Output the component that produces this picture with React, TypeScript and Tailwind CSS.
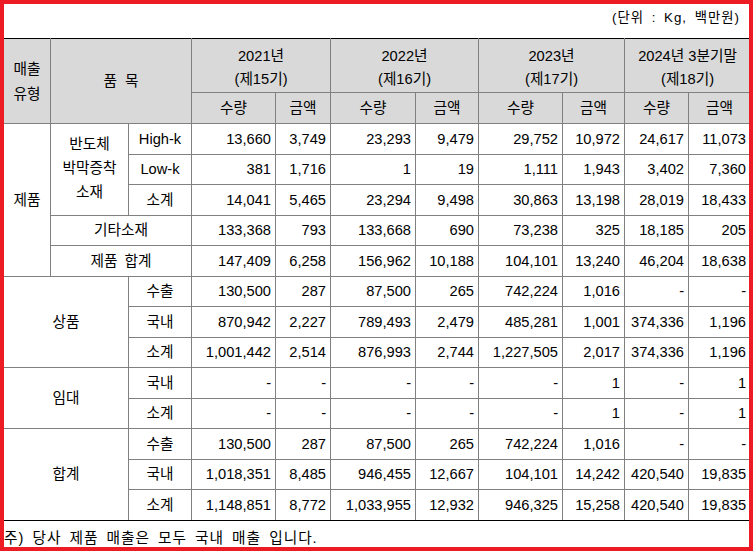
import type { ReactNode } from "react";

const YEARS = [
  { year: "2021년", term: "(제15기)" },
  { year: "2022년", term: "(제16기)" },
  { year: "2023년", term: "(제17기)" },
  { year: "2024년 3분기말", term: "(제18기)" },
];

const CELL = "border border-[#808080] p-0 align-middle";
const NUM = `${CELL} text-right pr-[4px]`;

function Nums({ vals, last = false }: { vals: string[]; last?: boolean }) {
  return (
    <>
      {vals.map((v, i) => (
        <td key={i} className={last ? `${NUM} border-b-black` : NUM}>
          {v}
        </td>
      ))}
    </>
  );
}

function Sub({ children, last = false }: { children: ReactNode; last?: boolean }) {
  return <td className={last ? `${CELL} text-center border-b-black` : `${CELL} text-center`}>{children}</td>;
}

export default function App() {
  return (
    <div className="w-[753px] h-[551px] border-[4px] border-[#ed1c24] bg-white overflow-hidden font-['Liberation_Sans','Noto_Sans_CJK_KR',sans-serif] text-black">
      {/* ── Unit caption ─────────────────────────────────────────── */}
      <div className="h-[34px] pt-[4px] pr-[9px] text-right text-[13.33px] leading-[20px] tracking-[1px] [word-spacing:3px]">
        (단위 : Kg, 백만원)
      </div>

      {/* ── Table ────────────────────────────────────────────────── */}
      <table className="w-[747px] ml-[-1px] table-fixed border-collapse text-[14.67px] leading-[20px]">
        <colgroup>
          <col className="w-[47px]" />
          <col className="w-[78px]" />
          <col className="w-[63px]" />
          <col className="w-[84px]" />
          <col className="w-[55px]" />
          <col className="w-[85px]" />
          <col className="w-[63px]" />
          <col className="w-[84px]" />
          <col className="w-[62px]" />
          <col className="w-[64px]" />
          <col className="w-[62px]" />
        </colgroup>
        <thead className="bg-[#d9d9d9]">
          <tr className="h-[54px]">
            <th rowSpan={2} className={`${CELL} border-t-black font-normal leading-[25px] pt-[2px]`}>
              매출
              <br />
              유형
            </th>
            <th rowSpan={2} colSpan={2} className={`${CELL} border-t-black font-normal [word-spacing:4px]`}>
              품 목
            </th>
            {YEARS.map((y) => (
              <th key={y.year} colSpan={2} className={`${CELL} border-t-black font-normal leading-[23px] pt-[4px]`}>
                {y.year}
                <br />
                {y.term}
              </th>
            ))}
          </tr>
          <tr className="h-[31px]">
            {YEARS.map((y) => (
              <>
                <th key={`${y.year}-q`} className={`${CELL} font-normal`}>수량</th>
                <th key={`${y.year}-a`} className={`${CELL} font-normal`}>금액</th>
              </>
            ))}
          </tr>
        </thead>
        <tbody>
          {/* 제품 */}
          <tr className="h-[30.5px]">
            <td rowSpan={5} className={`${CELL} text-center`}>제품</td>
            <td rowSpan={3} className={`${CELL} text-center leading-[24px] pb-[2px]`}>
              반도체
              <br />
              박막증착
              <br />
              소재
            </td>
            <Sub>High-k</Sub>
            <Nums vals={["13,660", "3,749", "23,293", "9,479", "29,752", "10,972", "24,617", "11,073"]} />
          </tr>
          <tr className="h-[30.5px]">
            <Sub>Low-k</Sub>
            <Nums vals={["381", "1,716", "1", "19", "1,111", "1,943", "3,402", "7,360"]} />
          </tr>
          <tr className="h-[30.5px]">
            <Sub>소계</Sub>
            <Nums vals={["14,041", "5,465", "23,294", "9,498", "30,863", "13,198", "28,019", "18,433"]} />
          </tr>
          <tr className="h-[30.5px]">
            <td colSpan={2} className={`${CELL} text-center`}>기타소재</td>
            <Nums vals={["133,368", "793", "133,668", "690", "73,238", "325", "18,185", "205"]} />
          </tr>
          <tr className="h-[30.5px]">
            <td colSpan={2} className={`${CELL} text-center [word-spacing:3px]`}>제품 합계</td>
            <Nums vals={["147,409", "6,258", "156,962", "10,188", "104,101", "13,240", "46,204", "18,638"]} />
          </tr>

          {/* 상품 */}
          <tr className="h-[30.5px]">
            <td rowSpan={3} colSpan={2} className={`${CELL} text-center`}>상품</td>
            <Sub>수출</Sub>
            <Nums vals={["130,500", "287", "87,500", "265", "742,224", "1,016", "-", "-"]} />
          </tr>
          <tr className="h-[30.5px]">
            <Sub>국내</Sub>
            <Nums vals={["870,942", "2,227", "789,493", "2,479", "485,281", "1,001", "374,336", "1,196"]} />
          </tr>
          <tr className="h-[30.5px]">
            <Sub>소계</Sub>
            <Nums vals={["1,001,442", "2,514", "876,993", "2,744", "1,227,505", "2,017", "374,336", "1,196"]} />
          </tr>

          {/* 임대 */}
          <tr className="h-[30.5px]">
            <td rowSpan={2} colSpan={2} className={`${CELL} text-center`}>임대</td>
            <Sub>국내</Sub>
            <Nums vals={["-", "-", "-", "-", "-", "1", "-", "1"]} />
          </tr>
          <tr className="h-[30.5px]">
            <Sub>소계</Sub>
            <Nums vals={["-", "-", "-", "-", "-", "1", "-", "1"]} />
          </tr>

          {/* 합계 */}
          <tr className="h-[30.5px]">
            <td rowSpan={3} colSpan={2} className={`${CELL} text-center border-b-black`}>합계</td>
            <Sub>수출</Sub>
            <Nums vals={["130,500", "287", "87,500", "265", "742,224", "1,016", "-", "-"]} />
          </tr>
          <tr className="h-[30.5px]">
            <Sub>국내</Sub>
            <Nums vals={["1,018,351", "8,485", "946,455", "12,667", "104,101", "14,242", "420,540", "19,835"]} />
          </tr>
          <tr className="h-[30.5px]">
            <Sub last>소계</Sub>
            <Nums last vals={["1,148,851", "8,772", "1,033,955", "12,932", "946,325", "15,258", "420,540", "19,835"]} />
          </tr>
        </tbody>
      </table>

      {/* ── Footnote ─────────────────────────────────────────────── */}
      <div className="pt-[6px] text-[14.67px] leading-[22px] tracking-[1px] [word-spacing:3px]">
        주) 당사 제품 매출은 모두 국내 매출 입니다.
      </div>
    </div>
  );
}
